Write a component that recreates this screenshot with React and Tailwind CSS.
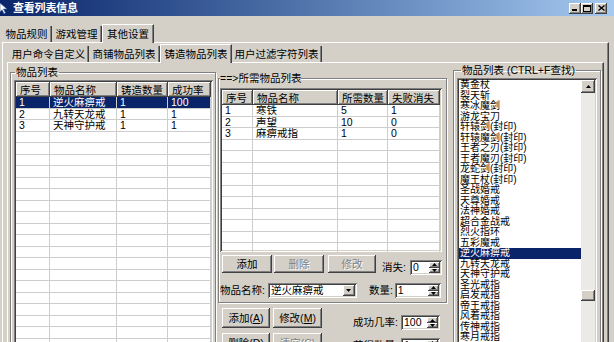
import React from "react";

const raised =
  "shadow-[inset_-1px_-1px_#404040,inset_1px_1px_#ffffff,inset_-2px_-2px_#808080,inset_2px_2px_#d4d0c8]";
const sunken =
  "shadow-[inset_1px_1px_#808080,inset_-1px_-1px_#ffffff,inset_2px_2px_#404040,inset_-2px_-2px_#d4d0c8]";
const etched = "border border-[#808080] shadow-[inset_1px_1px_#ffffff,1px_1px_#ffffff]";
const dim = "text-[#808080] [text-shadow:1px_1px_0_#ffffff]";

const leftCols = [
  { t: "序号", w: "w-[34px]" },
  { t: "物品名称", w: "w-[67px]" },
  { t: "铸造数量", w: "w-[51px]" },
  { t: "成功率", w: "w-[43px]" },
];
const leftRows = [
  ["1", "逆火麻痹戒", "1", "100"],
  ["2", "九转天龙戒", "1", "1"],
  ["3", "天神守护戒", "1", "1"],
];

const midCols = [
  { t: "序号", w: "w-[31px]" },
  { t: "物品名称", w: "w-[85px]" },
  { t: "所需数量", w: "w-[50px]" },
  { t: "失败消失", w: "w-[52px]" },
];
const midRows = [
  ["1", "寒铁", "5", "1"],
  ["2", "声望", "10", "0"],
  ["3", "麻痹戒指", "1", "0"],
];

const items = [
  "黄金杖", "裂天斩", "寒冰魔剑", "游龙宝刀", "轩辕剑(封印)", "轩辕魔剑(封印)",
  "王者之刃(封印)", "王者魔刃(封印)", "龙蛇剑(封印)", "魔王杖(封印)", "圣战婚戒",
  "天尊婚戒", "法神婚戒", "超合金战戒", "烈火指环", "五彩魔戒", "逆火麻痹戒",
  "九转天龙戒", "天神守护戒", "圣光戒指", "启发戒指", "帝王戒指", "风着戒指",
  "传神戒指", "寒月戒指", "冰雪戒指",
];

function Tri({ down }) {
  return (
    <svg width="5" height="3" viewBox="0 0 5 3">
      <path d={down ? "M0 0h5L2.5 3z" : "M2.5 0L5 3H0z"} fill="#000" />
    </svg>
  );
}

function WinBtn({ children, className = "" }) {
  return (
    <div className={`w-[12px] h-[11px] bg-[#d4d0c8] ${raised} flex items-center justify-center ${className}`}>
      {children}
    </div>
  );
}

function Tab({ w, sel, children }) {
  return (
    <div
      className={`${w} ${
        sel ? "h-[19px] -mb-px relative z-10 bg-[#d4d0c8] border-l border-t border-white" : "h-[16px]"
      } border-r border-r-[#404040] shadow-[inset_-1px_0_#808080] flex items-center justify-center whitespace-nowrap leading-[12px]`}
    >
      {children}
    </div>
  );
}

function ListView({ cols, rows, total, sel, className }) {
  const all = [...rows];
  while (all.length < total) all.push(["", "", "", ""]);
  return (
    <div className={`bg-white p-[2px] overflow-hidden ${sunken} ${className}`}>
      <div className="flex h-[15px]">
        {cols.map((c) => (
          <div
            key={c.t}
            className={`${c.w} shrink-0 ${raised} bg-[#d4d0c8] pl-[4px] flex items-center whitespace-nowrap leading-[12px]`}
          >
            {c.t}
          </div>
        ))}
      </div>
      {all.map((r, i) => (
        <div key={i} className={`flex h-[11.5px] ${i === sel ? "bg-[#0a246a] text-white" : ""}`}>
          {cols.map((c, j) => (
            <div
              key={j}
              className={`${c.w} shrink-0 border-r border-b border-[#cdcdcd] pl-[3px] leading-[11px] whitespace-nowrap overflow-hidden`}
            >
              {r[j]}
            </div>
          ))}
        </div>
      ))}
    </div>
  );
}

function Btn({ w, h = "h-[18px]", off, children }) {
  return (
    <div className={`${w} ${h} shrink-0 bg-[#d4d0c8] ${raised} flex items-center justify-center leading-[12px] ${off ? dim : ""}`}>
      {children}
    </div>
  );
}

function Spin({ w, v }) {
  return (
    <div className={`${w} h-[15px] shrink-0 bg-white p-[2px] ${sunken} flex`}>
      <span className="flex-1 pl-[1px] leading-[11px]">{v}</span>
      <div className="w-[11px] flex flex-col">
        <div className={`flex-1 bg-[#d4d0c8] ${raised} flex items-center justify-center`}>
          <Tri />
        </div>
        <div className={`flex-1 bg-[#d4d0c8] ${raised} flex items-center justify-center`}>
          <Tri down />
        </div>
      </div>
    </div>
  );
}

function Combo({ w, v }) {
  return (
    <div className={`${w} h-[15px] shrink-0 bg-white p-[2px] ${sunken} flex`}>
      <span className="flex-1 pl-[1px] leading-[11px] whitespace-nowrap">{v}</span>
      <div className={`w-[12px] bg-[#d4d0c8] ${raised} flex items-center justify-center`}>
        <Tri down />
      </div>
    </div>
  );
}

export default function App() {
  return (
    <div className="w-[614px] h-[342px] overflow-hidden bg-[#d4d0c8] text-black text-[10.5px] font-['Liberation_Sans','Noto_Sans_CJK_SC',sans-serif]">
      {/* title bar */}
      <div className="h-[16px] flex items-center bg-linear-to-r from-[#0a246a] to-[#a6caf0]">
        <svg className="-ml-[3px] w-[12px] h-[12px]" viewBox="0 0 12 12">
          <path d="M3 1l7 6H6.5l2 4-1.5.8-2-4L3 10z" fill="#fff" stroke="#3a5a9a" strokeWidth="0.6" />
        </svg>
        <span className="ml-[4px] text-white font-bold text-[11px] leading-none tracking-[-0.2px]">查看列表信息</span>
        <div className="ml-auto mr-[7px] flex">
          <WinBtn>
            <svg width="6" height="6" viewBox="0 0 6 6">
              <rect x="0" y="4" width="5" height="2" fill="#000" />
            </svg>
          </WinBtn>
          <WinBtn>
            <svg width="8" height="7" viewBox="0 0 8 7">
              <rect x="0.5" y="0.5" width="7" height="6" fill="none" stroke="#000" />
              <rect x="0" y="0" width="8" height="2" fill="#000" />
            </svg>
          </WinBtn>
          <WinBtn className="ml-[2px]">
            <svg width="7" height="6" viewBox="0 0 7 6">
              <path d="M0.5 0.5L6.5 5.5M6.5 0.5L0.5 5.5" stroke="#000" strokeWidth="1.4" />
            </svg>
          </WinBtn>
        </div>
      </div>

      {/* outer tabs */}
      <div className="pl-[2px] pr-[5px] pt-[7px]">
        <div className="flex items-end h-[19px]">
          <Tab w="w-[50px]">物品规则</Tab>
          <Tab w="w-[50px]">游戏管理</Tab>
          <Tab w="w-[52px]" sel>
            其他设置
          </Tab>
        </div>
        <div className="h-[300px] border-l border-t border-white border-r border-r-[#404040] shadow-[inset_-1px_0_#808080] pt-[2px]">
          {/* inner tabs */}
          <div className="flex items-end h-[17px] ml-[6px]">
            <Tab w="w-[80px]">用户命令自定义</Tab>
            <Tab w="w-[71px]">商铺物品列表</Tab>
            <Tab w="w-[72px]" sel>
              铸造物品列表
            </Tab>
            <Tab w="w-[90px]">用户过滤字符列表</Tab>
          </div>
          <div className="h-[290px] ml-[4px] mr-[4px] border-l border-t border-white border-r border-r-[#404040] shadow-[inset_-1px_0_#808080] flex items-start">
            {/* left group */}
            <fieldset className={`w-[206px] h-[290px] shrink-0 mt-[4px] ml-[2px] pl-[3px] pr-[2px] ${etched}`}>
              <legend className="ml-[1px] px-[1px] leading-[11px]">物品列表</legend>
              <ListView cols={leftCols} rows={leftRows} total={24} sel={0} className="w-[199px] h-[290px] mt-[2px]" />
            </fieldset>

            {/* middle */}
            <div className="w-[229px] shrink-0 ml-[2px] mt-[10px]">
              <fieldset className={`w-[229px] pl-[1px] pr-[4px] pt-[4px] pb-[4px] ${etched}`}>
                <legend className="leading-[11px]">==&gt;所需物品列表</legend>
                <ListView cols={midCols} rows={midRows} total={14} className="w-[222px] h-[164px]" />
                <div className="flex items-start mt-[3px] h-[20px] pl-[2px]">
                  <Btn w="w-[50px]">添加</Btn>
                  <div className="ml-[2px]">
                    <Btn w="w-[50px]" off>
                      删除
                    </Btn>
                  </div>
                  <div className="ml-[4px]">
                    <Btn w="w-[48px]" off>
                      修改
                    </Btn>
                  </div>
                  <div className="ml-[6px] mt-[5px] flex items-center">
                    <span className="leading-[15px] whitespace-nowrap">消失:</span>
                    <div className="ml-[4px]">
                      <Spin w="w-[32px]" v="0" />
                    </div>
                  </div>
                </div>
                <div className="flex items-center mt-[8px] h-[15px]">
                  <span className="whitespace-nowrap">物品名称:</span>
                  <div className="ml-[3px]">
                    <Combo w="w-[89px]" v="逆火麻痹戒" />
                  </div>
                  <span className="ml-[12px] whitespace-nowrap">数量:</span>
                  <div className="ml-[2px]">
                    <Spin w="w-[46px]" v="1" />
                  </div>
                </div>
              </fieldset>
              <div className="flex mt-[5px]">
                <div className="ml-[4px] flex flex-col gap-[5px]">
                  <div className="flex gap-[3px]">
                    <Btn w="w-[48px]" h="h-[20px]">
                      添加(<u>A</u>)
                    </Btn>
                    <Btn w="w-[49px]" h="h-[20px]">
                      修改(<u>M</u>)
                    </Btn>
                  </div>
                  <div className="flex gap-[3px]">
                    <Btn w="w-[48px]" h="h-[20px]">
                      删除(<u>D</u>)
                    </Btn>
                    <Btn w="w-[49px]" h="h-[20px]" off>
                      清空(<u>C</u>)
                    </Btn>
                  </div>
                </div>
                <div className="ml-[31px] mt-[7px] flex flex-col gap-[7px]">
                  <div className="flex items-center">
                    <span className="w-[45px] whitespace-nowrap">成功几率:</span>
                    <div className="ml-[3px]">
                      <Spin w="w-[39px]" v="100" />
                    </div>
                  </div>
                  <div className="flex items-center">
                    <span className="w-[45px] whitespace-nowrap">获得数量:</span>
                    <div className="ml-[3px]">
                      <Spin w="w-[39px]" v="1" />
                    </div>
                  </div>
                </div>
              </div>
            </div>

            {/* right group */}
            <fieldset className={`w-[148px] h-[290px] shrink-0 ml-[6px] mt-[2px] pl-[3px] pr-[3px] pt-[2px] ${etched}`}>
              <legend className="ml-[4px] px-[1px] leading-[11px] whitespace-nowrap">物品列表 (CTRL+F查找)</legend>
              <div className={`w-[140px] h-[280px] bg-white p-[2px] ${sunken} flex overflow-hidden`}>
                <div className="flex-1 text-[10px]">
                  {items.map((t, i) => (
                    <div
                      key={t}
                      className={`h-[10.5px] leading-[10.5px] pl-[1px] whitespace-nowrap ${
                        i === 16 ? "bg-[#0a246a] text-white" : ""
                      }`}
                    >
                      {t}
                    </div>
                  ))}
                </div>
                <div className="w-[14px] shrink-0 bg-[#ebeae6] flex flex-col">
                  <div className={`h-[13px] bg-[#d4d0c8] ${raised} flex items-center justify-center`}>
                    <Tri />
                  </div>
                  <div className="h-[197px]" />
                  <div className={`h-[11px] bg-[#d4d0c8] ${raised}`} />
                </div>
              </div>
            </fieldset>
          </div>
        </div>
      </div>
    </div>
  );
}
